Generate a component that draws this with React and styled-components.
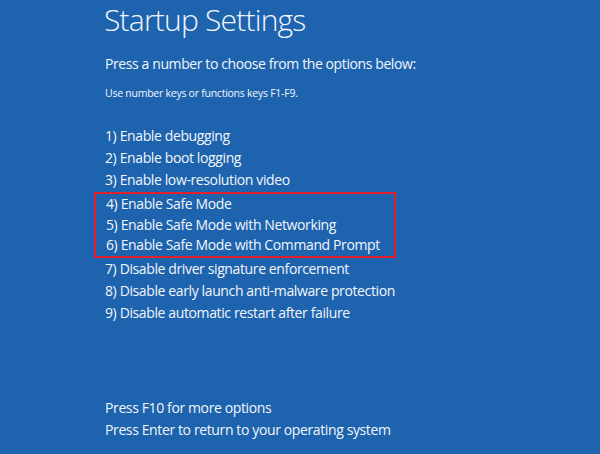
import React from 'react'
import styled, {createGlobalStyle} from "styled-components";

const GlobalStyle = createGlobalStyle`
  html, body {
    margin: 0;
    padding: 0;
    background: #1e63ae;
  }
`;

const Screen = styled.div`
  width: 600px;
  height: 454px;
  box-sizing: border-box;
  padding: 2px 0 0 104px;
  background: #1e63ae;
  color: #f2f6fb;
  font-family: "Open Sans", "Noto Sans", sans-serif;
  display: flex;
  flex-direction: column;
  overflow: hidden;
`;

const Title = styled.h1`
  margin: 0;
  font-size: 30px;
  font-weight: 300;
  line-height: 36px;
  letter-spacing: -0.8px;
`;

const Prompt = styled.p`
  margin: 15px 0 0 1px;
  font-size: 14px;
  line-height: 22px;
  letter-spacing: -0.4px;
`;

const Hint = styled.p`
  margin: 10px 0 0 1px;
  font-size: 10.5px;
  line-height: 16px;
  letter-spacing: -0.25px;
`;

const OptionList = styled.div`
  margin-top: 24px;
  display: flex;
  flex-direction: column;
`;

const Highlight = styled.div`
  box-sizing: border-box;
  margin: 1px 0 0 -10px;
  width: 302px;
  height: 66px;
  padding: 0 0 0 9px;
  border: 2px solid #e2202c;
  display: flex;
  flex-direction: column;
  justify-content: center;
`;

const Option = styled.div`
  font-size: 14px;
  line-height: ${p => p.$tight ? "20.7px" : "22px"};
  letter-spacing: -0.38px;
  padding-left: 1px;
  white-space: nowrap;
`;

const Footer = styled.div`
  margin-top: auto;
  margin-bottom: 13px;
  display: flex;
  flex-direction: column;
`;

const FooterLine = styled.div`
  font-size: 14px;
  line-height: 22px;
  letter-spacing: -0.38px;
  padding-left: 1px;
`;

const before = [
    "1) Enable debugging",
    "2) Enable boot logging",
    "3) Enable low-resolution video",
];
const safe = [
    "4) Enable Safe Mode",
    "5) Enable Safe Mode with Networking",
    "6) Enable Safe Mode with Command Prompt",
];
const after = [
    "7) Disable driver signature enforcement",
    "8) Disable early launch anti-malware protection",
    "9) Disable automatic restart after failure",
];

export default function App() {
    return (
        <>
            <GlobalStyle/>
            <Screen>
                <Title>Startup Settings</Title>
                <Prompt>Press a number to choose from the options below:</Prompt>
                <Hint>Use number keys or functions keys F1-F9.</Hint>
                <OptionList>
                    {before.map(t => <Option key={t}>{t}</Option>)}
                    <Highlight>
                        {safe.map(t => <Option key={t} $tight>{t}</Option>)}
                    </Highlight>
                    {after.map(t => <Option key={t}>{t}</Option>)}
                </OptionList>
                <Footer>
                    <FooterLine>Press F10 for more options</FooterLine>
                    <FooterLine>Press Enter to return to your operating system</FooterLine>
                </Footer>
            </Screen>
        </>
    )
}
